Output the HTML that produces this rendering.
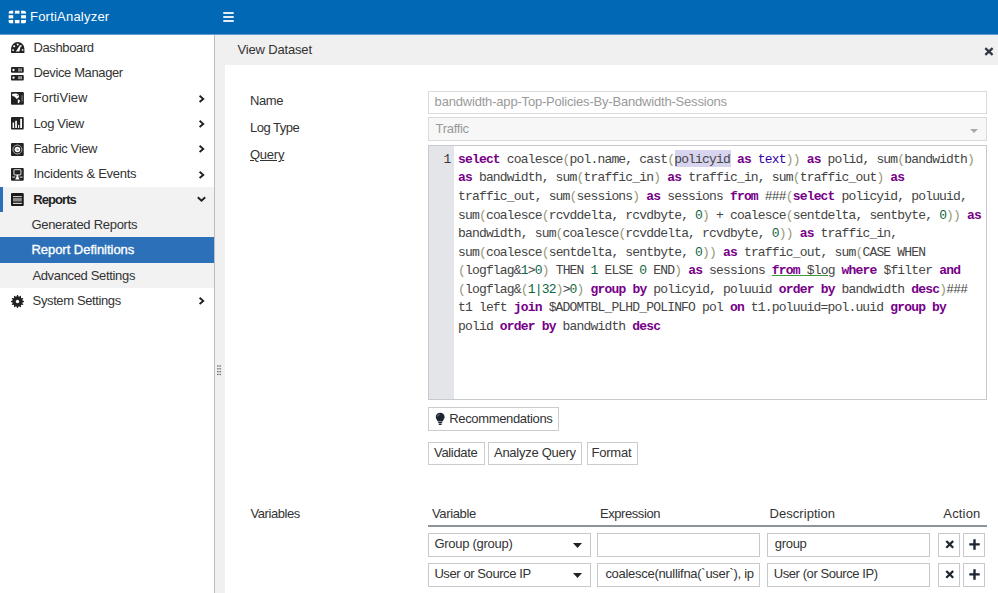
<!DOCTYPE html>
<html><head><meta charset="utf-8"><title>View Dataset</title><style>
html,body{margin:0;padding:0;}
body{width:998px;height:593px;overflow:hidden;position:relative;background:#fff;font-family:"Liberation Sans", sans-serif;}
.b{position:absolute;}
.t{position:absolute;white-space:nowrap;font-family:"Liberation Sans", sans-serif;}
.code{font-family:"Liberation Mono", monospace;font-size:13px;line-height:13px;letter-spacing:-0.830px;color:#444;}
.code b{font-weight:bold;}
</style></head>
<body>
<div class="b" style="left:0px;top:0px;width:998.00px;height:34.00px;background:#0068b5;"></div>
<div class="b" style="left:0px;top:34px;width:998.00px;height:1.00px;background:#5f9bd0;"></div>
<svg class="b" style="left:8px;top:9.5px" width="19" height="14" viewBox="0 0 19 14"><defs><clipPath id="lc"><rect x="0.4" y="0.4" width="17.8" height="13.2" rx="3.2"/></clipPath></defs><g clip-path="url(#lc)"><rect x="0.4" y="0.4" width="4.80" height="3.20" fill="#fff"/><rect x="6.9" y="0.4" width="4.60" height="3.20" fill="#fff"/><rect x="13.1" y="0.4" width="5.10" height="3.20" fill="#fff"/><rect x="0.4" y="5.2" width="4.80" height="3.20" fill="#fff"/><rect x="13.1" y="5.2" width="5.10" height="3.20" fill="#fff"/><rect x="0.4" y="10.0" width="4.80" height="3.60" fill="#fff"/><rect x="6.9" y="10.0" width="4.60" height="3.60" fill="#fff"/><rect x="13.1" y="10.0" width="5.10" height="3.60" fill="#fff"/></g></svg>
<div class="t" style="left:30.00px;top:10px;font-size:13.0px;line-height:13.0px;color:#fff;font-weight:normal;letter-spacing:0.217px;">FortiAnalyzer</div>
<div class="b" style="left:223px;top:12.4px;width:11.20px;height:2.00px;background:#e3ebf5;border-radius:1px;"></div>
<div class="b" style="left:223px;top:16.4px;width:11.20px;height:2.00px;background:#e3ebf5;border-radius:1px;"></div>
<div class="b" style="left:223px;top:20.2px;width:11.20px;height:2.00px;background:#e3ebf5;border-radius:1px;"></div>
<div class="b" style="left:214px;top:35px;width:1.00px;height:558.00px;background:#b7bcc6;"></div>
<div class="b" style="left:0px;top:186.77999999999997px;width:214.00px;height:101.32px;background:#f2f2f2;"></div>
<div class="b" style="left:0px;top:186.77999999999997px;width:3.20px;height:25.33px;background:#2a6fb8;"></div>
<div class="b" style="left:0px;top:237.44px;width:214.00px;height:25.33px;background:#2b70b8;"></div>
<svg class="b" style="left:10.5px;top:42.099999999999994px" width="14" height="12" viewBox="0 0 14 12">
<path d="M0.1 10.4 L0.1 6.7 A6.65 6.6 0 0 1 13.4 6.7 L13.4 10.4 Q13.4 11 12.8 11 L0.7 11 Q0.1 11 0.1 10.4 Z" fill="#222"/>
<circle cx="3.2" cy="4.2" r="1.05" fill="#fff"/><circle cx="2.1" cy="8.1" r="0.95" fill="#fff"/>
<circle cx="11.6" cy="8.0" r="0.95" fill="#d0d0d0"/><circle cx="6.7" cy="2.5" r="1" fill="#fff"/>
<path d="M4.9 9.6 L8.9 3.2 L9.9 3.6 L8.3 9.6 Z" fill="#fff"/><circle cx="9.8" cy="3.9" r="0.9" fill="#eee"/></svg>
<div class="t" style="left:33.50px;top:41px;font-size:13.0px;line-height:13.0px;color:#333;font-weight:normal;letter-spacing:-0.375px;">Dashboard</div>
<svg class="b" style="left:10.85px;top:66.72999999999999px" width="13" height="14" viewBox="0 0 13 14">
<rect x="0" y="0" width="12.75" height="5.75" rx="1" fill="#222"/><rect x="0" y="7.9" width="12.75" height="5.6" rx="1" fill="#222"/>
<circle cx="2.5" cy="3.0" r="1.15" fill="#fff"/><circle cx="2.5" cy="10.7" r="1.15" fill="#fff"/>
<rect x="7.2" y="1.4" width="1.7" height="1.3" fill="#bbb"/><rect x="9.3" y="1.4" width="1.7" height="1.3" fill="#bbb"/>
<rect x="7.2" y="3.1" width="1.7" height="1.3" fill="#bbb"/><rect x="9.3" y="3.1" width="1.7" height="1.3" fill="#bbb"/>
<rect x="7.2" y="9.2" width="1.7" height="3" fill="#aaa"/><rect x="9.3" y="9.2" width="1.7" height="3" fill="#aaa"/></svg>
<div class="t" style="left:33.50px;top:66px;font-size:13.0px;line-height:13.0px;color:#333;font-weight:normal;letter-spacing:-0.385px;">Device Manager</div>
<svg class="b" style="left:11px;top:92.00999999999999px" width="13" height="13" viewBox="0 0 13 13">
<rect x="0" y="0" width="12.9" height="12.75" rx="1" fill="#222"/>
<path d="M0.9 2.6 L1.8 1.8 L5.2 1.6 L7.4 2.4 L8.1 4.4 L7.0 6.3 L5.3 6.7 L3.8 4.8 L1.5 4.1 Z" fill="#fff"/>
<circle cx="6.3" cy="3.4" r="0.55" fill="#555"/>
<path d="M6.8 7.3 L8.9 8.2 L8.6 10.0 L7.4 11.5 L6.7 10.3 L6.9 8.9 Z" fill="#fff"/>
<rect x="10.5" y="3.2" width="1.2" height="6.4" fill="#777"/></svg>
<div class="t" style="left:33.50px;top:91px;font-size:13.0px;line-height:13.0px;color:#333;font-weight:normal;letter-spacing:0.000px;">FortiView</div>
<svg class="b" style="left:198px;top:94.55999999999999px" width="8" height="8" viewBox="0 0 8 8"><path d="M1.6 0.8 L5.2 3.9 L1.6 7" fill="none" stroke="#1f1f1f" stroke-width="1.9"/></svg>
<svg class="b" style="left:10.85px;top:117.28999999999999px" width="13" height="13" viewBox="0 0 13 13">
<rect x="0" y="0" width="12.75" height="12.5" rx="1" fill="#222"/>
<rect x="1.6" y="5.5" width="1.5" height="5.5" fill="#fff"/><rect x="4.2" y="3.8" width="1.7" height="7.2" fill="#fff"/>
<rect x="7.1" y="7.9" width="1.1" height="3.1" fill="#fff"/><rect x="9.2" y="1.7" width="1.8" height="9.3" fill="#fff"/></svg>
<div class="t" style="left:33.50px;top:117px;font-size:13.0px;line-height:13.0px;color:#333;font-weight:normal;letter-spacing:-0.357px;">Log View</div>
<svg class="b" style="left:198px;top:119.88999999999999px" width="8" height="8" viewBox="0 0 8 8"><path d="M1.6 0.8 L5.2 3.9 L1.6 7" fill="none" stroke="#1f1f1f" stroke-width="1.9"/></svg>
<svg class="b" style="left:10.85px;top:142.52px" width="13" height="13" viewBox="0 0 13 13">
<rect x="0" y="0" width="12.75" height="13" rx="1" fill="#222"/>
<circle cx="6.4" cy="6.5" r="4.5" fill="none" stroke="#b0b0b0" stroke-width="1"/>
<circle cx="6.4" cy="6.5" r="2.8" fill="#fff"/><circle cx="6.6" cy="6.7" r="1.2" fill="#999"/></svg>
<div class="t" style="left:33.50px;top:142px;font-size:13.0px;line-height:13.0px;color:#333;font-weight:normal;letter-spacing:-0.380px;">Fabric View</div>
<svg class="b" style="left:198px;top:145.22px" width="8" height="8" viewBox="0 0 8 8"><path d="M1.6 0.8 L5.2 3.9 L1.6 7" fill="none" stroke="#1f1f1f" stroke-width="1.9"/></svg>
<svg class="b" style="left:10.85px;top:167.95px" width="13" height="13" viewBox="0 0 13 13">
<rect x="0" y="0" width="12.75" height="12.8" rx="1" fill="#222"/>
<rect x="2.9" y="1.6" width="7.0" height="5.2" rx="1" fill="none" stroke="#b5b5b5" stroke-width="1.3"/>
<path d="M4.2 11.6 L5.5 8.8 L5.5 6.9 L7.3 6.9 L7.3 8.8 L8.6 11.6 Z" fill="#fff"/>
<rect x="1.3" y="8.4" width="3" height="1.4" fill="#aaa"/><rect x="8.6" y="8.4" width="3" height="1.4" fill="#aaa"/></svg>
<div class="t" style="left:33.50px;top:167px;font-size:13.0px;line-height:13.0px;color:#333;font-weight:normal;letter-spacing:-0.271px;">Incidents &amp; Events</div>
<svg class="b" style="left:198px;top:170.54999999999998px" width="8" height="8" viewBox="0 0 8 8"><path d="M1.6 0.8 L5.2 3.9 L1.6 7" fill="none" stroke="#1f1f1f" stroke-width="1.9"/></svg>
<svg class="b" style="left:10.85px;top:193.17999999999998px" width="13" height="13" viewBox="0 0 13 13">
<rect x="0" y="0" width="12.75" height="12.9" rx="1" fill="#1a1a1a"/>
<rect x="2" y="3.1" width="8.8" height="1" fill="#e0e0e0"/><rect x="2" y="5" width="8.8" height="3" fill="#8a8a8a"/>
<rect x="2" y="8.6" width="8.8" height="0.7" fill="#999"/><rect x="2" y="10" width="8.8" height="1" fill="#d0d0d0"/></svg>
<div class="t" style="left:33.20px;top:193px;font-size:13.0px;line-height:13.0px;color:#222;font-weight:bold;letter-spacing:-0.917px;">Reports</div>
<svg class="b" style="left:197.2px;top:196.47999999999996px" width="9" height="7" viewBox="0 0 9 7"><path d="M0.8 1.3 L4.5 4.8 L8.2 1.3" fill="none" stroke="#1f1f1f" stroke-width="1.9"/></svg>
<div class="t" style="left:31.40px;top:218px;font-size:13.0px;line-height:13.0px;color:#333;font-weight:normal;letter-spacing:-0.281px;">Generated Reports</div>
<div class="t" style="left:31.40px;top:243px;font-size:13.0px;line-height:13.0px;color:#fff;font-weight:normal;letter-spacing:-0.024px;-webkit-text-stroke:0.35px #fff;">Report Definitions</div>
<div class="t" style="left:32.40px;top:269px;font-size:13.0px;line-height:13.0px;color:#333;font-weight:normal;letter-spacing:-0.338px;">Advanced Settings</div>
<svg class="b" style="left:10.6px;top:294.9px" width="13" height="13" viewBox="0 0 13 13">
<polygon points="6.07,0.01 6.93,0.01 7.49,1.50 8.14,1.67 9.37,0.67 10.11,1.10 9.86,2.67 10.33,3.14 11.90,2.89 12.33,3.63 11.33,4.86 11.50,5.51 12.99,6.07 12.99,6.93 11.50,7.49 11.33,8.14 12.33,9.37 11.90,10.11 10.33,9.86 9.86,10.33 10.11,11.90 9.37,12.33 8.14,11.33 7.49,11.50 6.93,12.99 6.07,12.99 5.51,11.50 4.86,11.33 3.63,12.33 2.89,11.90 3.14,10.33 2.67,9.86 1.10,10.11 0.67,9.37 1.67,8.14 1.50,7.49 0.01,6.93 0.01,6.07 1.50,5.51 1.67,4.86 0.67,3.63 1.10,2.89 2.67,3.14 3.14,2.67 2.89,1.10 3.63,0.67 4.86,1.67 5.51,1.50" fill="#222"/><circle cx="6.5" cy="6.5" r="1.7" fill="#fff"/></svg>
<div class="t" style="left:32.60px;top:294px;font-size:13.0px;line-height:13.0px;color:#333;font-weight:normal;letter-spacing:-0.379px;">System Settings</div>
<svg class="b" style="left:198px;top:297.2px" width="8" height="8" viewBox="0 0 8 8"><path d="M1.6 0.8 L5.2 3.9 L1.6 7" fill="none" stroke="#1f1f1f" stroke-width="1.9"/></svg>
<div class="b" style="left:215px;top:35px;width:783.00px;height:30.00px;background:#f0f0f0;"></div>
<div class="b" style="left:215px;top:65px;width:10.00px;height:528.00px;background:#f0f0f0;"></div>
<svg class="b" style="left:216px;top:364px" width="7" height="13" viewBox="0 0 7 13"><rect x="1.0" y="1.4" width="1.7" height="1.3" fill="#777"/><rect x="3.4" y="1.4" width="1.7" height="1.3" fill="#777"/><rect x="1.0" y="4.199999999999999" width="1.7" height="1.3" fill="#777"/><rect x="3.4" y="4.199999999999999" width="1.7" height="1.3" fill="#777"/><rect x="1.0" y="7.0" width="1.7" height="1.3" fill="#777"/><rect x="3.4" y="7.0" width="1.7" height="1.3" fill="#777"/><rect x="1.0" y="9.799999999999999" width="1.7" height="1.3" fill="#777"/><rect x="3.4" y="9.799999999999999" width="1.7" height="1.3" fill="#777"/></svg>
<div class="t" style="left:237.50px;top:43px;font-size:13.0px;line-height:13.0px;color:#333;font-weight:normal;letter-spacing:-0.164px;">View Dataset</div>
<svg class="b" style="left:984px;top:46.5px" width="10" height="9" viewBox="0 0 10 9"><path d="M1.3 1.2 L8.6 7.8 M8.6 1.2 L1.3 7.8" stroke="#2f3845" stroke-width="2.3"/></svg>
<div class="t" style="left:250.00px;top:94px;font-size:13.0px;line-height:13.0px;color:#333;font-weight:normal;letter-spacing:-0.433px;">Name</div>
<div class="t" style="left:250.00px;top:121px;font-size:13.0px;line-height:13.0px;color:#333;font-weight:normal;letter-spacing:-0.500px;">Log Type</div>
<div class="t" style="left:250.00px;top:148px;font-size:13.0px;line-height:13.0px;color:#333;font-weight:normal;letter-spacing:-0.250px;"><u style="text-underline-offset:0.5px">Query</u></div>
<div class="t" style="left:250.50px;top:507px;font-size:13.0px;line-height:13.0px;color:#333;font-weight:normal;letter-spacing:-0.425px;">Variables</div>
<div class="b" style="left:428px;top:90.5px;width:559.00px;height:23.20px;border:1px solid #d9dbde;background:#fff;box-sizing:border-box;"></div>
<div class="t" style="left:434.60px;top:95px;font-size:13.0px;line-height:13.0px;color:#9a9a9a;font-weight:normal;letter-spacing:-0.189px;">bandwidth-app-Top-Policies-By-Bandwidth-Sessions</div>
<div class="b" style="left:428px;top:117.4px;width:559.00px;height:23.30px;border:1px solid #d9dbde;background:#f7f7f7;box-sizing:border-box;"></div>
<div class="t" style="left:435.60px;top:122px;font-size:13.0px;line-height:13.0px;color:#9a9a9a;font-weight:normal;letter-spacing:-0.317px;">Traffic</div>
<svg class="b" style="left:970px;top:128.6px" width="8" height="4" viewBox="0 0 8 4"><path d="M0 0 L8 0 L4 4 Z" fill="#a8a8a8"/></svg>
<div class="b" style="left:428px;top:145px;width:559.00px;height:255.00px;border:1px solid #c6c9ce;background:#fff;box-sizing:border-box;"></div>
<div class="b" style="left:429px;top:146px;width:25.00px;height:253.00px;background:#e4e5e9;"></div>
<div class="b" style="left:674.5px;top:149.5px;width:56.00px;height:17.50px;background:#d7d4f0;"></div>
<div class="t code" style="left:458px;top:152.90px"><b style="color:#770088">select</b> coalesce<span style="color:#999977">(</span>pol.name, cast<span style="color:#999977">(</span>policyid <b style="color:#770088">as</b> <span style="color:#3300aa">text</span><span style="color:#999977">))</span> <b style="color:#770088">as</b> polid, sum<span style="color:#999977">(</span>bandwidth<span style="color:#999977">)</span></div>
<div class="t code" style="left:458px;top:171.46px"><b style="color:#770088">as</b> bandwidth, sum<span style="color:#999977">(</span>traffic_in<span style="color:#999977">)</span> <b style="color:#770088">as</b> traffic_in, sum<span style="color:#999977">(</span>traffic_out<span style="color:#999977">)</span> <b style="color:#770088">as</b></div>
<div class="t code" style="left:458px;top:190.02px">traffic_out, sum<span style="color:#999977">(</span>sessions<span style="color:#999977">)</span> <b style="color:#770088">as</b> sessions <b style="color:#770088">from</b> ###<span style="color:#999977">(</span><b style="color:#770088">select</b> policyid, poluuid,</div>
<div class="t code" style="left:458px;top:208.58px">sum<span style="color:#999977">(</span>coalesce<span style="color:#999977">(</span>rcvddelta, rcvdbyte, <span style="color:#116644">0</span><span style="color:#999977">)</span> + coalesce<span style="color:#999977">(</span>sentdelta, sentbyte, <span style="color:#116644">0</span><span style="color:#999977">))</span> <b style="color:#770088">as</b></div>
<div class="t code" style="left:458px;top:227.14px">bandwidth, sum<span style="color:#999977">(</span>coalesce<span style="color:#999977">(</span>rcvddelta, rcvdbyte, <span style="color:#116644">0</span><span style="color:#999977">))</span> <b style="color:#770088">as</b> traffic_in,</div>
<div class="t code" style="left:458px;top:245.70px">sum<span style="color:#999977">(</span>coalesce<span style="color:#999977">(</span>sentdelta, sentbyte, <span style="color:#116644">0</span><span style="color:#999977">))</span> <b style="color:#770088">as</b> traffic_out, sum<span style="color:#999977">(</span>CASE WHEN</div>
<div class="t code" style="left:458px;top:264.26px"><span style="color:#999977">(</span>logflag&amp;<span style="color:#116644">1</span>&gt;<span style="color:#116644">0</span><span style="color:#999977">)</span> THEN <span style="color:#116644">1</span> ELSE <span style="color:#116644">0</span> END<span style="color:#999977">)</span> <b style="color:#770088">as</b> sessions <span style="text-decoration:underline;text-decoration-color:#3a9a3a;text-underline-offset:1px"><b style="color:#770088">from</b> $log</span> <b style="color:#770088">where</b> $filter <b style="color:#770088">and</b></div>
<div class="t code" style="left:458px;top:282.82px"><span style="color:#999977">(</span>logflag&amp;<span style="color:#999977">(</span><span style="color:#116644">1|32</span><span style="color:#999977">)</span>&gt;<span style="color:#116644">0</span><span style="color:#999977">)</span> <b style="color:#770088">group</b> <b style="color:#770088">by</b> policyid, poluuid <b style="color:#770088">order</b> <b style="color:#770088">by</b> bandwidth <b style="color:#770088">desc</b><span style="color:#999977">)</span>###</div>
<div class="t code" style="left:458px;top:301.38px">t1 left <b style="color:#770088">join</b> $ADOMTBL_PLHD_POLINFO pol <b style="color:#770088">on</b> t1.poluuid=pol.uuid <b style="color:#770088">group</b> <b style="color:#770088">by</b></div>
<div class="t code" style="left:458px;top:319.94px">polid <b style="color:#770088">order</b> <b style="color:#770088">by</b> bandwidth <b style="color:#770088">desc</b></div>
<div class="t code" style="left:443.6px;top:152.90px;color:#3a3a3a">1</div>
<div class="b" style="left:428px;top:407px;width:131.00px;height:24.00px;border:1px solid #c9ccd1;background:#fff;box-sizing:border-box;"></div>
<div class="t" style="left:449.30px;top:412px;font-size:13.0px;line-height:13.0px;color:#333;font-weight:normal;letter-spacing:-0.350px;">Recommendations</div>
<svg class="b" style="left:435px;top:412px" width="11" height="14" viewBox="0 0 11 14"><path d="M5.2 0.8 C2.6 0.8 0.8 2.6 0.8 5 C0.8 6.9 2.1 7.9 2.9 9.5 L7.5 9.5 C8.3 7.9 9.6 6.9 9.6 5 C9.6 2.6 7.8 0.8 5.2 0.8 Z" fill="#1d2530"/><path d="M2.6 4.4 Q3 2.6 4.6 2.1" stroke="#8a9099" stroke-width="0.9" fill="none"/><rect x="3.2" y="10.0" width="4" height="1.1" fill="#1d2530"/><rect x="3.6" y="11.5" width="3.2" height="1.6" rx="0.8" fill="#1d2530"/></svg>
<div class="b" style="left:428px;top:441.5px;width:57.00px;height:23.00px;border:1px solid #c9ccd1;background:#fff;box-sizing:border-box;"></div>
<div class="t" style="left:434.00px;top:446px;font-size:13.0px;line-height:13.0px;color:#333;font-weight:normal;letter-spacing:-0.329px;">Validate</div>
<div class="b" style="left:488px;top:441.5px;width:94.00px;height:23.00px;border:1px solid #c9ccd1;background:#fff;box-sizing:border-box;"></div>
<div class="t" style="left:494.00px;top:446px;font-size:13.0px;line-height:13.0px;color:#333;font-weight:normal;letter-spacing:-0.267px;">Analyze Query</div>
<div class="b" style="left:586.5px;top:441.5px;width:51.50px;height:23.00px;border:1px solid #c9ccd1;background:#fff;box-sizing:border-box;"></div>
<div class="t" style="left:591.40px;top:446px;font-size:13.0px;line-height:13.0px;color:#333;font-weight:normal;letter-spacing:-0.200px;">Format</div>
<div class="t" style="left:432.00px;top:507px;font-size:13.0px;line-height:13.0px;color:#333;font-weight:normal;letter-spacing:-0.357px;">Variable</div>
<div class="t" style="left:600.00px;top:507px;font-size:13.0px;line-height:13.0px;color:#333;font-weight:normal;letter-spacing:-0.433px;">Expression</div>
<div class="t" style="left:769.50px;top:507px;font-size:13.0px;line-height:13.0px;color:#333;font-weight:normal;letter-spacing:0.050px;">Description</div>
<div class="t" style="left:943.30px;top:507px;font-size:13.0px;line-height:13.0px;color:#333;font-weight:normal;letter-spacing:0.180px;">Action</div>
<div class="b" style="left:428px;top:525px;width:559.00px;height:2.00px;background:#8d939b;"></div>
<div class="b" style="left:428px;top:533px;width:163.00px;height:24.00px;border:1px solid #c6c9ce;background:#fff;box-sizing:border-box;"></div>
<div class="b" style="left:597px;top:533px;width:163.00px;height:24.00px;border:1px solid #c6c9ce;background:#fff;box-sizing:border-box;"></div>
<div class="b" style="left:767px;top:533px;width:162.50px;height:24.00px;border:1px solid #c6c9ce;background:#fff;box-sizing:border-box;"></div>
<div class="b" style="left:938px;top:533px;width:22.00px;height:24.00px;border:1px solid #c6c9ce;background:#fff;box-sizing:border-box;"></div>
<div class="b" style="left:963.3px;top:533px;width:21.90px;height:24.00px;border:1px solid #c6c9ce;background:#fff;box-sizing:border-box;"></div>
<svg class="b" style="left:573px;top:543px" width="9" height="5" viewBox="0 0 9 5"><path d="M0 0 L9 0 L4.5 5 Z" fill="#222"/></svg>
<svg class="b" style="left:944.6px;top:540.2px" width="10" height="9" viewBox="0 0 10 9"><path d="M1.3 1 L8.2 7.8 M8.2 1 L1.3 7.8" stroke="#1d2530" stroke-width="2.3"/></svg>
<svg class="b" style="left:969.3px;top:538.8px" width="11" height="11" viewBox="0 0 11 11"><path d="M5.5 0.3 L5.5 10.7 M0.3 5.4 L10.7 5.4" stroke="#1d2530" stroke-width="2.4"/></svg>
<div class="t" style="left:434.40px;top:537px;font-size:13.0px;line-height:13.0px;color:#333;font-weight:normal;letter-spacing:-0.267px;">Group (group)</div>
<div class="t" style="left:774.80px;top:537px;font-size:13.0px;line-height:13.0px;color:#333;font-weight:normal;letter-spacing:-0.300px;">group</div>
<div class="b" style="left:428px;top:563px;width:163.00px;height:24.00px;border:1px solid #c6c9ce;background:#fff;box-sizing:border-box;"></div>
<div class="b" style="left:597px;top:563px;width:163.00px;height:24.00px;border:1px solid #c6c9ce;background:#fff;box-sizing:border-box;"></div>
<div class="b" style="left:767px;top:563px;width:162.50px;height:24.00px;border:1px solid #c6c9ce;background:#fff;box-sizing:border-box;"></div>
<div class="b" style="left:938px;top:563px;width:22.00px;height:24.00px;border:1px solid #c6c9ce;background:#fff;box-sizing:border-box;"></div>
<div class="b" style="left:963.3px;top:563px;width:21.90px;height:24.00px;border:1px solid #c6c9ce;background:#fff;box-sizing:border-box;"></div>
<svg class="b" style="left:573px;top:573px" width="9" height="5" viewBox="0 0 9 5"><path d="M0 0 L9 0 L4.5 5 Z" fill="#222"/></svg>
<svg class="b" style="left:944.6px;top:570.2px" width="10" height="9" viewBox="0 0 10 9"><path d="M1.3 1 L8.2 7.8 M8.2 1 L1.3 7.8" stroke="#1d2530" stroke-width="2.3"/></svg>
<svg class="b" style="left:969.3px;top:568.8px" width="11" height="11" viewBox="0 0 11 11"><path d="M5.5 0.3 L5.5 10.7 M0.3 5.4 L10.7 5.4" stroke="#1d2530" stroke-width="2.4"/></svg>
<div class="t" style="left:434.40px;top:567px;font-size:13.0px;line-height:13.0px;color:#333;font-weight:normal;letter-spacing:-0.413px;">User or Source IP</div>
<div class="t" style="left:605.40px;top:567px;font-size:13.0px;line-height:13.0px;color:#333;font-weight:normal;letter-spacing:-0.289px;">coalesce(nullifna(`user`), ip</div>
<div class="t" style="left:773.80px;top:567px;font-size:13.0px;line-height:13.0px;color:#333;font-weight:normal;letter-spacing:-0.433px;">User (or Source IP)</div>
</body></html>
